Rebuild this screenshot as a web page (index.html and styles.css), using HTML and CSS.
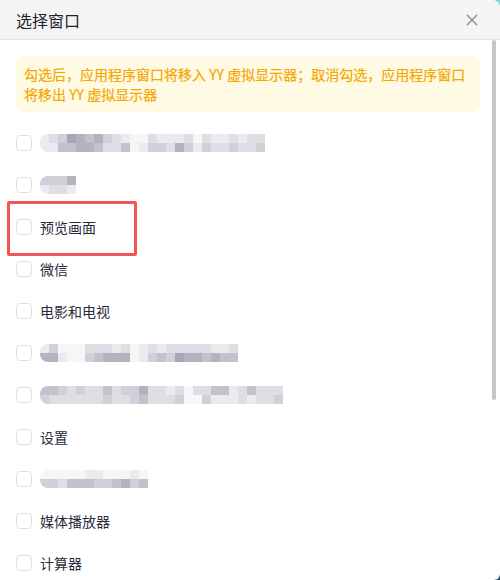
FILE: index.html
```html
<!DOCTYPE html>
<html lang="zh">
<head>
<meta charset="utf-8">
<title>选择窗口</title>
<link rel="stylesheet" href="styles.css">
</head>
<body>
<div class="dialog">
  <div class="header">
    <span class="title">选择窗口</span>
    <svg class="close" width="12" height="12" viewBox="0 0 12 12"><path d="M1 1L11 11M11 1L1 11" stroke="#8a8a94" stroke-width="1.4" fill="none"/></svg>
  </div>
  <div class="body">
    <div class="notice">勾选后，应用程序窗口将移入 YY 虚拟显示器；取消勾选，应用程序窗口将移出 YY 虚拟显示器</div>
    <ul class="list">
      <li class="item"><span class="cb"></span>
        <div class="blob">
          <div class="br"><i class="s1"></i><i class="s2"></i><i class="s3"></i><i class="s6"></i><i class="s5"></i><i class="s4"></i><i class="s5"></i><i class="s3"></i><i class="s2"></i><i class="s1"></i><i class="s0"></i><i class="s0"></i><i class="s2"></i><i class="s1"></i><i class="s1"></i><i class="s1"></i><i class="s2"></i><i class="s0"></i><i class="s2"></i><i class="s1"></i><i class="s1"></i><i class="s2"></i><i class="s1"></i><i class="s2"></i><i class="s2"></i></div>
          <div class="br"><i class="s1"></i><i class="s1"></i><i class="s4"></i><i class="s4"></i><i class="s5"></i><i class="s5"></i><i class="s4"></i><i class="s2"></i><i class="s2"></i><i class="s4"></i><i class="s0"></i><i class="s1"></i><i class="s3"></i><i class="s3"></i><i class="s2"></i><i class="s5"></i><i class="s3"></i><i class="s1"></i><i class="s3"></i><i class="s2"></i><i class="s2"></i><i class="s3"></i><i class="s2"></i><i class="s2"></i><i class="s3"></i></div>
        </div>
      </li>
      <li class="item"><span class="cb"></span>
        <div class="blob">
          <div class="br"><i class="s3"></i><i class="s3"></i><i class="s3"></i><i class="s5"></i></div>
          <div class="br"><i class="s1"></i><i class="s2"></i><i class="s2"></i><i class="s1"></i></div>
        </div>
      </li>
      <li class="item"><span class="cb"></span><span class="label">预览画面</span></li>
      <li class="item"><span class="cb"></span><span class="label">微信</span></li>
      <li class="item"><span class="cb"></span><span class="label">电影和电视</span></li>
      <li class="item"><span class="cb"></span>
        <div class="blob">
          <div class="br"><i class="s1"></i><i class="s3"></i><i class="s0"></i><i class="s0"></i><i class="s0"></i><i class="s2"></i><i class="s2"></i><i class="s2"></i><i class="s1"></i><i class="s2"></i><i class="s0"></i><i class="s1"></i><i class="s2"></i><i class="s1"></i><i class="s2"></i><i class="s2"></i><i class="s2"></i><i class="s2"></i><i class="s2"></i><i class="s1"></i><i class="s1"></i><i class="s2"></i></div>
          <div class="br"><i class="s5"></i><i class="s5"></i><i class="s1"></i><i class="s0"></i><i class="s0"></i><i class="s3"></i><i class="s4"></i><i class="s5"></i><i class="s5"></i><i class="s5"></i><i class="s0"></i><i class="s1"></i><i class="s3"></i><i class="s4"></i><i class="s3"></i><i class="s6"></i><i class="s5"></i><i class="s5"></i><i class="s4"></i><i class="s5"></i><i class="s4"></i><i class="s4"></i></div>
        </div>
      </li>
      <li class="item"><span class="cb"></span>
        <div class="blob">
          <div class="br"><i class="s4"></i><i class="s4"></i><i class="s3"></i><i class="s2"></i><i class="s3"></i><i class="s2"></i><i class="s2"></i><i class="s4"></i><i class="s2"></i><i class="s3"></i><i class="s3"></i><i class="s5"></i><i class="s2"></i><i class="s2"></i><i class="s1"></i><i class="s2"></i><i class="s0"></i><i class="s2"></i><i class="s2"></i><i class="s4"></i><i class="s4"></i><i class="s1"></i><i class="s2"></i><i class="s4"></i><i class="s2"></i><i class="s2"></i><i class="s2"></i></div>
          <div class="br"><i class="s3"></i><i class="s2"></i><i class="s2"></i><i class="s2"></i><i class="s2"></i><i class="s2"></i><i class="s2"></i><i class="s3"></i><i class="s2"></i><i class="s2"></i><i class="s3"></i><i class="s4"></i><i class="s2"></i><i class="s2"></i><i class="s2"></i><i class="s3"></i><i class="s0"></i><i class="s0"></i><i class="s3"></i><i class="s1"></i><i class="s1"></i><i class="s1"></i><i class="s2"></i><i class="s1"></i><i class="s2"></i><i class="s2"></i><i class="s3"></i></div>
        </div>
      </li>
      <li class="item"><span class="cb"></span><span class="label">设置</span></li>
      <li class="item"><span class="cb"></span>
        <div class="blob">
          <div class="br"><i class="s0"></i><i class="s0"></i><i class="s0"></i><i class="s0"></i><i class="s0"></i><i class="s1"></i><i class="s1"></i><i class="s0"></i><i class="s0"></i><i class="s0"></i><i class="s1"></i><i class="s0"></i></div>
          <div class="br"><i class="s3"></i><i class="s3"></i><i class="s2"></i><i class="s4"></i><i class="s4"></i><i class="s4"></i><i class="s3"></i><i class="s3"></i><i class="s4"></i><i class="s5"></i><i class="s3"></i><i class="s4"></i></div>
        </div>
      </li>
      <li class="item"><span class="cb"></span><span class="label">媒体播放器</span></li>
      <li class="item"><span class="cb"></span><span class="label">计算器</span></li>
    </ul>
    <div class="highlight"></div>
  </div>
  <div class="scrollbar"></div>
</div>
</body>
</html>
```
FILE: styles.css
```css
html, body {
  margin: 0;
  padding: 0;
}
body {
  width: 500px;
  height: 580px;
  overflow: hidden;
  background: linear-gradient(to bottom, #8fd0d2, #1d5b60);
  font-family: "Noto Sans CJK SC", "Noto Sans", sans-serif;
}
.dialog {
  position: relative;
  width: 500px;
  height: 580px;
  background: #ffffff;
  border-top-right-radius: 8px;
  border-bottom-right-radius: 6px;
  overflow: hidden;
}
.header {
  height: 39px;
  background: #f4f4f4;
  border-bottom: 1px solid #e2e2e4;
  display: flex;
  align-items: center;
  justify-content: space-between;
  padding: 0 22px 0 16px;
}
.title {
  font-size: 16px;
  color: #1e1e2c;
  line-height: 20px;
}
.close {
  display: block;
}
.body {
  position: relative;
  padding: 16px 20px 0 16px;
}
.notice {
  background: #fffae3;
  color: #f5a700;
  font-size: 14px;
  line-height: 20px;
  padding: 8px 2px 8px 8px;
  border-radius: 8px;
  -webkit-text-stroke: 0.2px #f5a700;
}
.list {
  list-style: none;
  margin: 10px 0 0 0;
  padding: 0;
  display: flex;
  flex-direction: column;
}
.item {
  height: 42px;
  display: flex;
  align-items: center;
  gap: 8px;
}
.cb {
  width: 14px;
  height: 14px;
  border: 1px solid #dfdfe6;
  border-radius: 4px;
  background: #fff;
  flex: none;
}
.label {
  font-size: 14px;
  color: #2a2a3c;
  line-height: 20px;
}
.blob {
  display: flex;
  flex-direction: column;
  border-radius: 8px 0 0 8px;
  overflow: hidden;
  filter: blur(0.4px);
}
.br {
  display: flex;
}
.br i {
  display: block;
  width: 9px;
  height: 9px;
}
.s0 { background: #f6f6f8; }
.s1 { background: #ebebef; }
.s2 { background: #dedee4; }
.s3 { background: #d0d0d8; }
.s4 { background: #c2c2cc; }
.s5 { background: #b3b3c0; }
.s6 { background: #a6a6b5; }
.highlight {
  position: absolute;
  left: 7px;
  top: 161px;
  width: 124px;
  height: 49px;
  border: 3px solid #f25555;
  border-radius: 2px;
}
.scrollbar {
  position: absolute;
  left: 492px;
  top: 40px;
  width: 4px;
  height: 360px;
  background: #c6c6c6;
  border-radius: 2px;
}
```
